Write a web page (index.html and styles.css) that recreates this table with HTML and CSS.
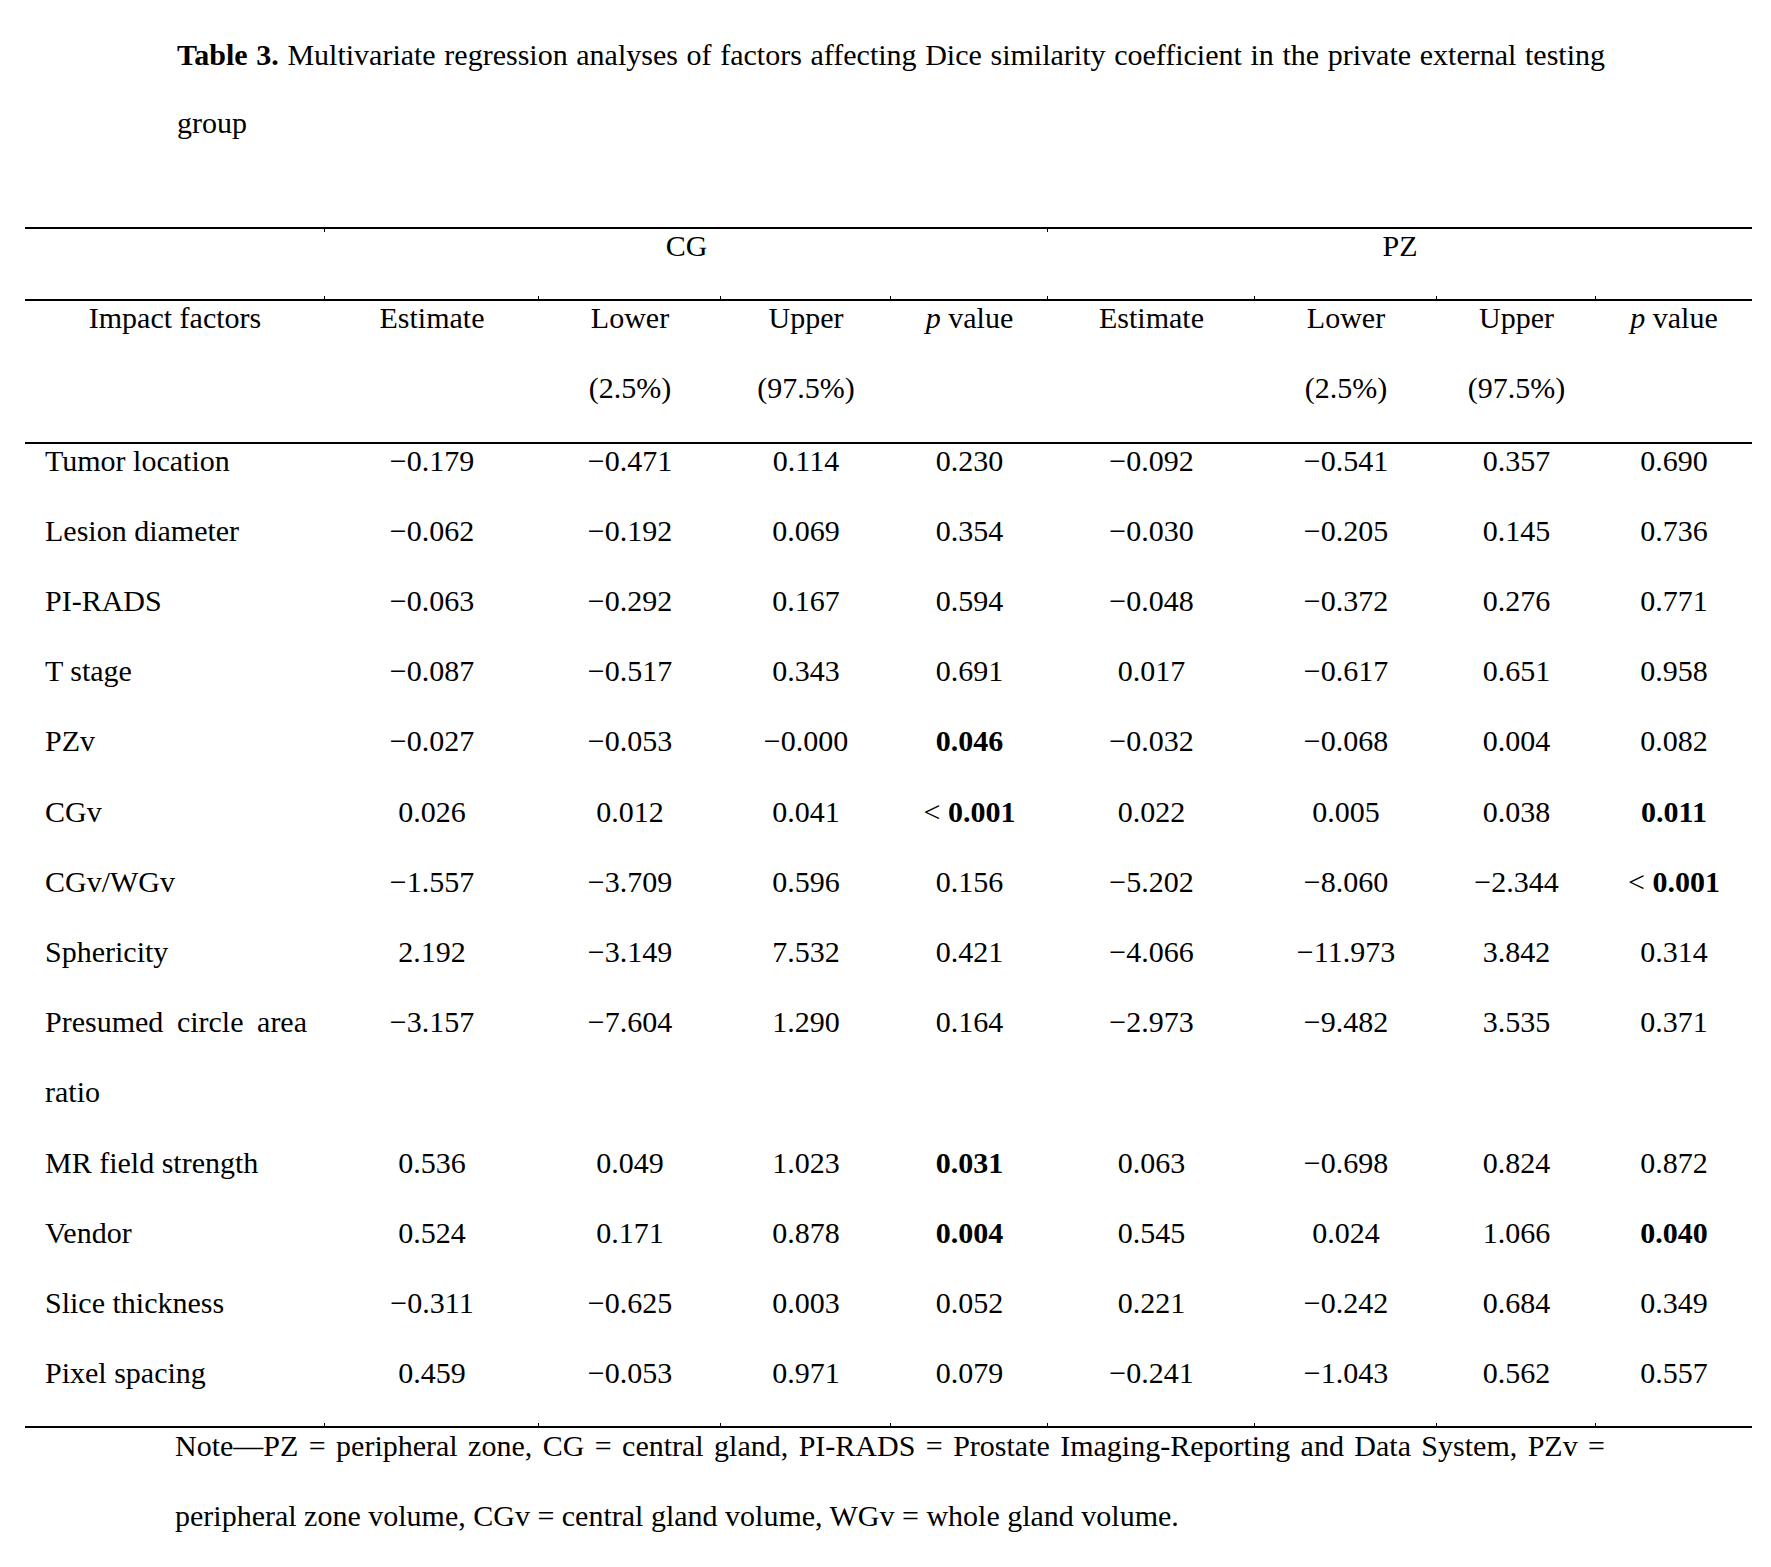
FILE: index.html
```html
<!DOCTYPE html>
<html lang="en">
<head>
<meta charset="utf-8">
<title>Table 3</title>
<link rel="stylesheet" href="styles.css">
</head>
<body>
<div class="page">
  <p class="caption"><b>Table 3.</b> Multivariate regression analyses of factors affecting Dice similarity coefficient in the private external testing group</p>

  <div class="reg">
    <div class="rule top"></div>
    <div class="c"></div>
    <div class="c span4">CG</div>
    <div class="c span4">PZ</div>

    <div class="rule mid"></div>
    <div class="c">Impact factors</div>
    <div class="c">Estimate</div>
    <div class="c">Lower<br>(2.5%)</div>
    <div class="c">Upper<br>(97.5%)</div>
    <div class="c"><i>p</i> value</div>
    <div class="c">Estimate</div>
    <div class="c">Lower<br>(2.5%)</div>
    <div class="c">Upper<br>(97.5%)</div>
    <div class="c"><i>p</i> value</div>

    <div class="rule"></div>
    <div class="c lbl">Tumor location</div><div class="c">−0.179</div><div class="c">−0.471</div><div class="c">0.114</div><div class="c">0.230</div><div class="c">−0.092</div><div class="c">−0.541</div><div class="c">0.357</div><div class="c">0.690</div>
    <div class="c lbl">Lesion diameter</div><div class="c">−0.062</div><div class="c">−0.192</div><div class="c">0.069</div><div class="c">0.354</div><div class="c">−0.030</div><div class="c">−0.205</div><div class="c">0.145</div><div class="c">0.736</div>
    <div class="c lbl">PI-RADS</div><div class="c">−0.063</div><div class="c">−0.292</div><div class="c">0.167</div><div class="c">0.594</div><div class="c">−0.048</div><div class="c">−0.372</div><div class="c">0.276</div><div class="c">0.771</div>
    <div class="c lbl">T stage</div><div class="c">−0.087</div><div class="c">−0.517</div><div class="c">0.343</div><div class="c">0.691</div><div class="c">0.017</div><div class="c">−0.617</div><div class="c">0.651</div><div class="c">0.958</div>
    <div class="c lbl">PZv</div><div class="c">−0.027</div><div class="c">−0.053</div><div class="c">−0.000</div><div class="c"><b>0.046</b></div><div class="c">−0.032</div><div class="c">−0.068</div><div class="c">0.004</div><div class="c">0.082</div>
    <div class="c lbl">CGv</div><div class="c">0.026</div><div class="c">0.012</div><div class="c">0.041</div><div class="c">&lt; <b>0.001</b></div><div class="c">0.022</div><div class="c">0.005</div><div class="c">0.038</div><div class="c"><b>0.011</b></div>
    <div class="c lbl">CGv/WGv</div><div class="c">−1.557</div><div class="c">−3.709</div><div class="c">0.596</div><div class="c">0.156</div><div class="c">−5.202</div><div class="c">−8.060</div><div class="c">−2.344</div><div class="c">&lt; <b>0.001</b></div>
    <div class="c lbl">Sphericity</div><div class="c">2.192</div><div class="c">−3.149</div><div class="c">7.532</div><div class="c">0.421</div><div class="c">−4.066</div><div class="c">−11.973</div><div class="c">3.842</div><div class="c">0.314</div>
    <div class="c lbl">Presumed circle area ratio</div><div class="c">−3.157</div><div class="c">−7.604</div><div class="c">1.290</div><div class="c">0.164</div><div class="c">−2.973</div><div class="c">−9.482</div><div class="c">3.535</div><div class="c">0.371</div>
    <div class="c lbl">MR field strength</div><div class="c">0.536</div><div class="c">0.049</div><div class="c">1.023</div><div class="c"><b>0.031</b></div><div class="c">0.063</div><div class="c">−0.698</div><div class="c">0.824</div><div class="c">0.872</div>
    <div class="c lbl">Vendor</div><div class="c">0.524</div><div class="c">0.171</div><div class="c">0.878</div><div class="c"><b>0.004</b></div><div class="c">0.545</div><div class="c">0.024</div><div class="c">1.066</div><div class="c"><b>0.040</b></div>
    <div class="c lbl">Slice thickness</div><div class="c">−0.311</div><div class="c">−0.625</div><div class="c">0.003</div><div class="c">0.052</div><div class="c">0.221</div><div class="c">−0.242</div><div class="c">0.684</div><div class="c">0.349</div>
    <div class="c lbl">Pixel spacing</div><div class="c">0.459</div><div class="c">−0.053</div><div class="c">0.971</div><div class="c">0.079</div><div class="c">−0.241</div><div class="c">−1.043</div><div class="c">0.562</div><div class="c">0.557</div>
    <div class="rule mid"></div>
  </div>

  <p class="note">Note—PZ = peripheral zone, CG = central gland, PI-RADS = Prostate Imaging-Reporting and Data System, PZv = peripheral zone volume, CGv = central gland volume, WGv = whole gland volume.</p>
</div>
</body>
</html>
```
FILE: styles.css
```css
html, body {
  margin: 0;
  padding: 0;
  background: #fff;
}

body {
  font-family: "Liberation Serif", "Times New Roman", serif;
  font-size: 30px;
  color: #000;
}

.page {
  width: 1771px;
  padding-bottom: 20px;
}

.caption {
  margin: 21px 0 70px 177px;
  width: 1428px;
  line-height: 68px;
  text-align: justify;
}

.reg {
  margin-left: 25px;
  display: grid;
  grid-template-columns: 300px 214px 182px 170px 157px 207px 182px 159px 156px;
  width: 1727px;
}

.rule {
  grid-column: 1 / -1;
  height: 2px;
  background: #000;
  position: relative;
}

.rule.top::after,
.rule.mid::before {
  content: "";
  position: absolute;
  left: 0;
  right: 0;
  height: 3px;
}

.rule.top::after {
  top: 2px;
  background:
    linear-gradient(#000, #000) 299px 0 / 1px 100% no-repeat,
    linear-gradient(#000, #000) 1022px 0 / 1px 100% no-repeat;
}

.rule.mid::before {
  top: -3px;
  background:
    linear-gradient(#000, #000) 299px 0 / 1px 100% no-repeat,
    linear-gradient(#000, #000) 513px 0 / 1px 100% no-repeat,
    linear-gradient(#000, #000) 695px 0 / 1px 100% no-repeat,
    linear-gradient(#000, #000) 865px 0 / 1px 100% no-repeat,
    linear-gradient(#000, #000) 1022px 0 / 1px 100% no-repeat,
    linear-gradient(#000, #000) 1229px 0 / 1px 100% no-repeat,
    linear-gradient(#000, #000) 1411px 0 / 1px 100% no-repeat,
    linear-gradient(#000, #000) 1570px 0 / 1px 100% no-repeat;
}

.c {
  line-height: 70.2px;
  margin: -18px 0 18px;
  text-align: center;
  white-space: nowrap;
}

.c.span4 {
  grid-column: span 4;
}

.c.lbl {
  text-align: justify;
  white-space: normal;
  padding: 0 18px 0 20px;
}

.c b {
  font-weight: bold;
}

.note {
  margin: -17px 0 0 175px;
  width: 1430px;
  line-height: 70px;
  text-align: justify;
}
```
